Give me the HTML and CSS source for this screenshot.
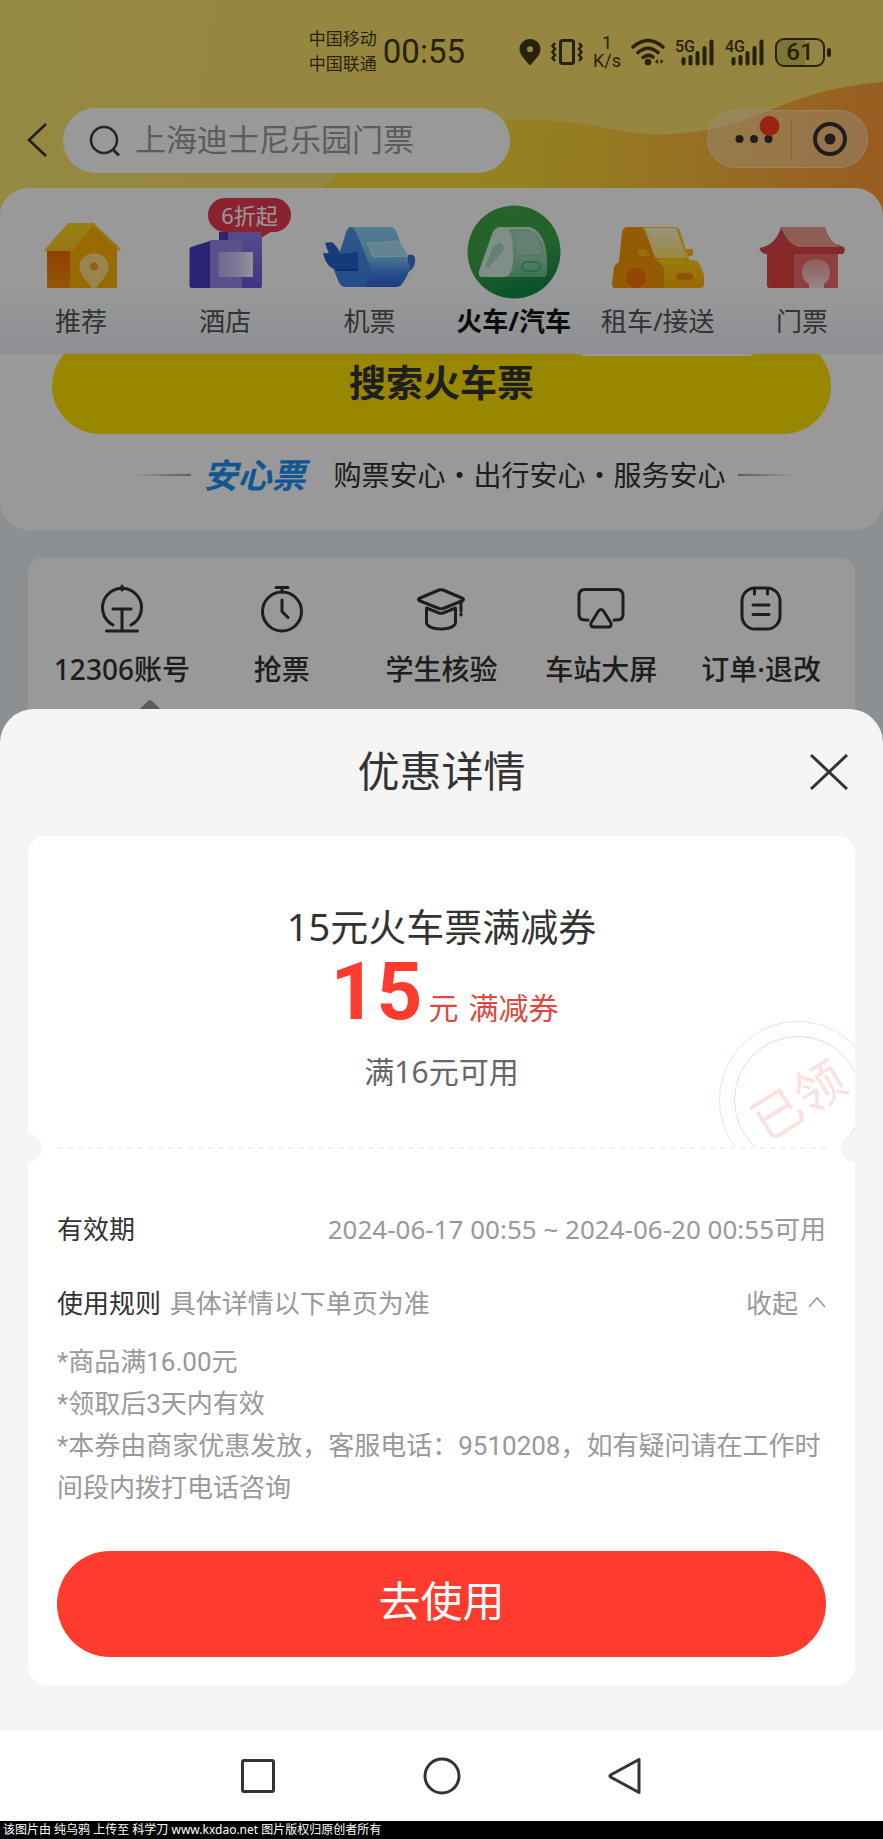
FILE: index.html
```html
<!DOCTYPE html>
<html lang="zh-CN">

<head>
    <meta charset="UTF-8">
    <meta name="viewport" content="width=device-width, initial-scale=1.0">
    <title>优惠详情</title>
    <link rel="stylesheet" href="styles.css">
</head>

<body>

    <div class="app">
        <!-- Header -->
        <header class="header">
            <svg class="header-bg" viewBox="0 0 883 216" preserveAspectRatio="none" aria-hidden="true">
                <defs>
                    <linearGradient id="wave" x1="300" x2="883" y1="0" y2="60" gradientUnits="userSpaceOnUse">
                        <stop offset="0" stop-color="#f8dc3c" />
                        <stop offset="0.400" stop-color="#f9d838" />
                        <stop offset="0.700" stop-color="#fbbb3c" />
                        <stop offset="1" stop-color="#fd9c36" />
                    </linearGradient>
                </defs>
                <path d="M300 216C340 150 440 118 540 120C600 122 620 136 670 134C760 130 780 90 883 82V216Z" fill="url(#wave)" />
            </svg>

            <div class="status-bar">
                <div class="carriers"><span>中国移动</span><span>中国联通</span></div>
                <span class="clock">00:55</span>
                <svg width="22" height="28" viewBox="0 0 22 28"><path d="M11 1C5 1 .5 5.500.5 11.200C.5 16.500 5 20 9.500 26Q11 28 12.500 26C17 20 21.500 16.500 21.500 11.200C21.500 5.500 17 1 11 1ZM11 8.200A3 3 0 1 1 11 14.200A3 3 0 1 1 11 8.200Z" fill="#453a12" fill-rule="evenodd" /></svg>
                <svg width="32" height="28" viewBox="0 0 32 28" fill="none" stroke="#453a12" stroke-width="3"><rect x="9.500" y="2.500" width="13" height="23" rx="2" /><path d="M4 5l-2.500 3 2.500 3-2.500 3 2.500 3-2.500 3 2.500 3M28 5l2.500 3-2.500 3 2.500 3-2.500 3 2.500 3-2.500 3" stroke-width="2.500" /></svg>
                <div class="speed"><span>1</span><span>K/s</span></div>
                <svg width="34" height="28" viewBox="0 0 34 28" fill="none" stroke="#453a12" stroke-width="3.500" stroke-linecap="round"><path d="M2 9Q17-4 32 9M7 14.500Q17 6 27 14.500M12 19.500Q17 15.500 22 19" /><circle cx="17" cy="24" r="1.500" /><path d="M27 21v5l-3-2.500zM29.500 21v5l3-2.500z" fill="#453a12" stroke="none" /></svg>
                <svg width="40" height="28" viewBox="0 0 40 28"><text class="net" x="0" y="14">5G</text><path d="M8.500 21v4.500M15.500 19v6.500M22.500 15v10.500M29.500 10v15.500M36.500 3.500v22" stroke="#453a12" stroke-width="4" stroke-linecap="round" /></svg>
                <svg width="40" height="28" viewBox="0 0 40 28"><text class="net" x="0" y="14">4G</text><path d="M8.500 21v4.500M15.500 19v6.500M22.500 15v10.500M29.500 10v15.500M36.500 3.500v22" stroke="#453a12" stroke-width="4" stroke-linecap="round" /></svg>
                <div class="battery">61</div>
            </div>

            <div class="search-row">
                <button class="back" aria-label="返回">
                    <svg width="22" height="36" viewBox="0 0 22 36" fill="none" stroke="#333" stroke-width="2.500"><path d="M20 2L3 18L20 34" /></svg>
                </button>
                <label class="search-box">
                    <svg width="32" height="32" viewBox="0 0 32 32" fill="none" stroke="#3a3d42" stroke-width="2.500"><circle cx="15" cy="15" r="13" /><path d="M24.500 25L30 30.500" stroke-width="3" /></svg>
                    <input type="text" placeholder="上海迪士尼乐园门票" aria-label="搜索">
                </label>
                <div class="capsule">
                    <button class="more" aria-label="更多">
                        <svg width="40" height="40" viewBox="0 0 40 40"><circle cx="5.500" cy="20" r="4" fill="#333" /><circle cx="20" cy="20" r="4" fill="#333" /><circle cx="34.500" cy="20" r="4" fill="#333" /><circle cx="35.500" cy="7" r="10" fill="#ff3a20" /></svg>
                    </button>
                    <button class="exit" aria-label="关闭小程序">
                        <svg width="36" height="36" viewBox="0 0 36 36"><circle cx="18" cy="18" r="15" fill="none" stroke="#333" stroke-width="4" /><circle cx="18" cy="18" r="5.500" fill="#333" /></svg>
                    </button>
                </div>
            </div>
        </header>

        <!-- Category tabs -->
        <nav class="tabs">
            <a href="#" class="tab">
                <svg class="tab-icon" viewBox="0 0 100 100">
                    <defs>
                        <linearGradient id="roof" x1="0" x2="0" y1="0" y2="1"><stop offset="0" stop-color="#ffd918" /><stop offset="1" stop-color="#ffc52c" /></linearGradient>
                        <linearGradient id="side" x1="0" x2="0" y1="0" y2="1"><stop offset="0" stop-color="#f06a06" /><stop offset="1" stop-color="#f69110" /></linearGradient>
                    </defs>
                    <path d="M16 47H40V86H16Z" fill="url(#side)" />
                    <path d="M62 23L86 46V86H39V48Z" fill="#ffaf08" />
                    <path d="M37 21H62L40 49H12.500Z" fill="url(#roof)" />
                    <path d="M40 49L62 22L89 48" fill="none" stroke="#ffc824" stroke-width="2.500" />
                    <path d="M63 52C55 52 49 57.500 49 65C49 74 58 79 60 84Q63 87 66 84C68 79 77 74 77 65C77 57.500 71 52 63 52Z" fill="#ffdc86" stroke="#ffe9a8" />
                    <circle cx="63" cy="64.500" r="4" fill="#f4a21c" />
                </svg>
                <span>推荐</span>
            </a>
            <a href="#" class="tab">
                <svg class="tab-icon" viewBox="0 0 100 100">
                    <defs>
                        <linearGradient id="pane"><stop offset="0" stop-color="#b9b0f5" /><stop offset="0.600" stop-color="#d5cffa" /><stop offset="1" stop-color="#f6f4ff" /></linearGradient>
                        <linearGradient id="tower" x1="0" x2="0" y1="0" y2="1"><stop offset="0" stop-color="#8d80e8" /><stop offset="1" stop-color="#6c58d8" /></linearGradient>
                    </defs>
                    <path d="M44 30H87V84Q87 86 85 86H44Z" fill="url(#tower)" />
                    <path d="M44 30H53V40H44Z" fill="#4b3bc4" />
                    <path d="M35 38H67V86H35Z" fill="#9388e6" />
                    <path d="M35 39L16 45Q14.500 46 14.500 48V84Q14.500 86 17 86H35Z" fill="#4d3cc4" />
                    <path d="M43.500 50H78V75H43.500Z" fill="url(#pane)" />
                </svg>
                <span class="badge">6折起</span>
                <span>酒店</span>
            </a>
            <a href="#" class="tab">
                <svg class="tab-icon" viewBox="0 0 100 100">
                    <defs>
                        <linearGradient id="plane" x1="0" x2="0" y1="0" y2="1"><stop offset="0" stop-color="#88d2ef" /><stop offset="0.550" stop-color="#76b9f2" /><stop offset="0.800" stop-color="#3d7be4" /><stop offset="1" stop-color="#3468d8" /></linearGradient>
                        <linearGradient id="nose" x1="0" x2="0" y1="0" y2="1"><stop offset="0" stop-color="#4f93e8" /><stop offset="1" stop-color="#3f7fe2" /></linearGradient>
                    </defs>
                    <path d="M6 41L13 40Q18 44 22 52H10Z" fill="#2e63c8" />
                    <path d="M88 53Q95 51 96 56Q97 66 89 70Z" fill="#3c77d8" />
                    <path d="M31 25H71Q75 25 77 29L91 65Q90 72 83 82Q81 85 77 85H28Q22 85 20 80L15 68L25 38Q27 26 31 25Z" fill="url(#plane)" />
                    <path d="M31 25Q36 26 38 32L52 66Q51 78 46 85H28Q22 85 20 80L15 68L26 34Q28 26 31 25Z" fill="url(#nose)" />
                    <path d="M4 51Q21 53 39 50V68H17Q7 65 4 51Z" fill="#235fca" />
                    <path d="M17 68H39" stroke="#1b3fa5" stroke-width="1.500" />
                    <path d="M48 41L80 39L89 54L54 55Z" fill="#a9dcf2" stroke="#c7ebf7" />
                </svg>
                <span>机票</span>
            </a>
            <a href="#" class="tab active">
                <svg class="tab-icon" viewBox="0 0 100 100">
                    <defs>
                        <linearGradient id="train" x1="0" x2="0" y1="0" y2="1"><stop offset="0" stop-color="#d2ebdf" /><stop offset="1" stop-color="#6bbf8d" /></linearGradient>
                        <linearGradient id="disc" x1="0" x2="0.300" y1="0" y2="1"><stop offset="0" stop-color="#41a845" /><stop offset="0.600" stop-color="#3ba44c" /><stop offset="1" stop-color="#168a46" /></linearGradient>
                    </defs>
                    <circle cx="50" cy="50" r="46.500" fill="url(#disc)" />
                    <path d="M34 25H64C76 26 83 42 83 58V71Q83 75 79 75H40Z" fill="url(#train)" />
                    <path d="M36 25C45 26 49 38 49 55C49 66 47 75 40 75H18Q14 75 15 69L28 32Q31 25 36 25Z" fill="#d5ede5" />
                    <path d="M48 28H64C73 30 78 40 79 52Q68 54 56 54Q51 53 51 46Q51 35 46 28Z" fill="#a9d6c1" stroke="#7cc29b" />
                    <path d="M35 41Q41 42 39 49L24 66Q21 67 22 62L29 45Z" fill="#a5d5c4" />
                    <rect x="58" y="60" width="18" height="9" rx="4.500" fill="none" stroke="#4aa673" stroke-width="1.500" />
                </svg>
                <span>火车/汽车</span>
            </a>
            <a href="#" class="tab">
                <svg class="tab-icon" viewBox="0 0 100 100">
                    <defs>
                        <linearGradient id="glass" x1="0" x2="0" y1="0" y2="1"><stop offset="0" stop-color="#fff6cf" /><stop offset="1" stop-color="#ffe36b" /></linearGradient>
                        <linearGradient id="hood" x1="0" x2="0" y1="0" y2="1"><stop offset="0" stop-color="#ffd21c" /><stop offset="1" stop-color="#ffae04" /></linearGradient>
                    </defs>
                    <path d="M19 25H66Q70 25 72 29L82 60H46Z" fill="#ffc610" />
                    <path d="M20 25H34L50 58L56 64V86H7Q4 86 4 82L6 65Q7 62 11 60L14 30Q15 25 20 25Z" fill="#f69808" />
                    <path d="M37 26H68L79 56H47Z" fill="url(#glass)" />
                    <path d="M32 47H38L42 54H32Q28 50 32 47ZM78 47H84Q87 50 84 54H80Z" fill="#ffb91a" />
                    <path d="M46 58H86Q91 59 93 65L96 73V82Q96 86 92 86H56V66Q53 60 46 58Z" fill="url(#hood)" />
                    <circle cx="28" cy="76" r="10" fill="#f4730a" />
                    <rect x="68" y="71" width="17" height="7" rx="3.500" fill="#f28a08" />
                </svg>
                <span>租车/接送</span>
            </a>
            <a href="#" class="tab">
                <svg class="tab-icon" viewBox="0 0 100 100">
                    <defs>
                        <linearGradient id="arch" x1="0" x2="0" y1="0" y2="1"><stop offset="0" stop-color="#f09c9c" /><stop offset="1" stop-color="#f8dede" /></linearGradient>
                    </defs>
                    <path d="M15 50H86V83Q86 86 83 86H18Q15 86 15 83Z" fill="#e04243" />
                    <path d="M42 52H86V83Q86 86 83 86H42Z" fill="#e86a6a" />
                    <path d="M29 25H73Q76 37 83 42L92 45Q94 48 91 52H86H13Q8 50 7.500 46Q24 43 29 25Z" fill="#de4749" />
                    <path d="M29 25H73Q76 40 88 45H47Q35 42 29 25Z" fill="#f09a90" />
                    <path d="M57 86V82Q50 78 50 71Q50 58 64 57Q78 58 78 71Q78 78 72 82V86Z" fill="url(#arch)" />
                </svg>
                <span>门票</span>
            </a>
        </nav>

        <!-- Ticket search -->
        <section class="search-card">
            <div class="search-wrap">
                <button class="search-btn">搜索火车票</button>
                <span class="bubble"></span>
            </div>
            <div class="assurance">
                <span class="line"></span>
                <strong>安心票</strong>
                <span>购票安心・出行安心・服务安心</span>
                <span class="line right"></span>
            </div>
        </section>

        <!-- Services -->
        <section class="services">
            <a href="#" class="service">
                <svg width="50" height="50" viewBox="0 0 50 50" class="line-icon"><path d="M16 41A19.500 19.500 0 1 1 34 41M25 2V6M16 25H34M25 25V46M9.500 47H40.500" /></svg>
                <span>12306账号</span>
            </a>
            <a href="#" class="service">
                <svg width="50" height="50" viewBox="0 0 50 50" class="line-icon"><circle cx="25" cy="27.500" r="19.500" /><path d="M19 3.500H31M25 4V8M25 16V27.500L31 33.500" /></svg>
                <span>抢票</span>
            </a>
            <a href="#" class="service">
                <svg width="50" height="50" viewBox="0 0 50 50" class="line-icon"><path d="M3 14.500L23 6Q25 5.500 27 6L47 14.500Q48 15.500 47 16.500L27 24.500Q25 25 23 24.500L3 16.500Q2 15.500 3 14.500ZM10.500 24V39Q11 42 17 44Q25 46 33 44Q39 42 39.500 39V24M10.500 24L23 29Q25 29.500 27 29L39.500 24M45 18V27M45 30V31" /></svg>
                <span>学生核验</span>
            </a>
            <a href="#" class="service">
                <svg width="50" height="50" viewBox="0 0 50 50" class="line-icon"><path d="M12 36H9Q3 36 3 30V12Q3 5.500 9 5.500H41Q47 5.500 47 12V30Q47 36 41 36H38M22.500 27Q25 24 27.500 27L35 39Q36 43 32 43H18Q14 43 15 39Z" /></svg>
                <span>车站大屏</span>
            </a>
            <a href="#" class="service">
                <svg width="50" height="50" viewBox="0 0 50 50" class="line-icon"><rect x="6" y="4" width="38" height="41" rx="13" /><path d="M18.500 5V10M31.500 5V10M17 21H33M17 30.500H33" /></svg>
                <span>订单·退改</span>
            </a>
            <span class="pointer"></span>
        </section>

        <div class="mask"></div>
    </div>

    <!-- Coupon details sheet -->
    <main class="sheet">
        <div class="sheet-head">
            <h1>优惠详情</h1>
            <button class="close" aria-label="关闭">
                <svg width="40" height="40" viewBox="0 0 40 40" stroke="#333" stroke-width="3"><path d="M2 3L38 37M38 3L2 37" /></svg>
            </button>
        </div>

        <div class="coupon">
            <div class="coupon-top">
                <h2>15元火车票满减券</h2>
                <p class="amount"><b>15</b><span>元</span><span>满减券</span></p>
                <p class="condition">满16元可用</p>
                <div class="stamp"><span>已领</span></div>
            </div>

            <div class="divider"></div>

            <div class="coupon-info">
                <div class="row">
                    <span class="label">有效期</span>
                    <span>2024-06-17 00:55 ~ 2024-06-20 00:55可用</span>
                </div>
                <div class="row">
                    <span><span class="label">使用规则</span> <span class="hint">具体详情以下单页为准</span></span>
                    <button class="toggle">收起
                        <svg width="18" height="12" viewBox="0 0 18 12" fill="none" stroke="#999" stroke-width="1.500"><path d="M1 11L9 2L17 11" /></svg>
                    </button>
                </div>
                <div class="rules">
                    <p>*商品满16.00元</p>
                    <p>*领取后3天内有效</p>
                    <p>*本券由商家优惠发放，客服电话：9510208，如有疑问请在工作时间段内拨打电话咨询</p>
                </div>
                <button class="use-btn">去使用</button>
            </div>
        </div>
    </main>

    <!-- System navigation -->
    <nav class="system-nav">
        <button aria-label="最近任务"><svg width="40" height="40" viewBox="0 0 40 40"><rect x="4.500" y="4.500" width="31" height="31" rx="1.500" /></svg></button>
        <button aria-label="主页"><svg width="40" height="40" viewBox="0 0 40 40"><circle cx="20" cy="20" r="17" /></svg></button>
        <button aria-label="返回上一页"><svg width="40" height="40" viewBox="0 0 40 40"><path d="M33 3.500V36.500L4.500 21Q3.500 20 4.500 19Z" /></svg></button>
    </nav>

    <footer class="credit">该图片由 纯乌鸦 上传至 科学刀 www.kxdao.net 图片版权归原创者所有</footer>

</body>

</html>
```
FILE: styles.css
```css
/* Global Styles */
* {
    box-sizing: border-box;
}

body {
    margin: 0;
    font-family: "Noto Sans", "Noto Sans CJK SC", sans-serif;
    background-color: #f5f5f5;
    color: #333;
}

h1, h2, p {
    margin: 0;
    font-weight: normal;
}

a {
    color: inherit;
    text-decoration: none;
}

button {
    padding: 0;
    border: none;
    background: none;
    font-family: inherit;
    color: inherit;
    cursor: pointer;
}

svg {
    display: block;
    flex-shrink: 0;
    overflow: visible;
}

.app {
    position: relative;
    background-color: #ecf0f3;
}

.mask {
    position: absolute;
    inset: 0;
    z-index: 3;
    background-color: rgba(0, 0, 0, 0.4);
}

/* Header */
.header {
    position: relative;
    height: 216px;
    background: linear-gradient(100deg, #f6e66e, #fbe16c 30%, #f8de6c);
}

.header-bg {
    position: absolute;
    inset: 0;
    width: 100%;
    height: 100%;
}

.status-bar {
    position: relative;
    display: flex;
    align-items: center;
    justify-content: flex-end;
    gap: 10px;
    height: 108px;
    padding: 0 52px 4px 0;
    color: #453a12;
}

.carriers {
    display: flex;
    flex-direction: column;
    padding-bottom: 2px;
    font-size: 17px;
    line-height: 25px;
}

.clock {
    margin: 0 44px 0 -4px;
    font-family: Roboto, sans-serif;
    font-size: 33px;
    line-height: 40px;
}

.speed {
    display: flex;
    flex-direction: column;
    align-items: center;
    font-family: Roboto, sans-serif;
    font-size: 18px;
    line-height: 18px;
}

.net {
    font-family: Roboto, sans-serif;
    font-size: 16px;
    font-weight: 500;
    fill: #453a12;
}

.battery {
    position: relative;
    width: 50px;
    height: 29px;
    margin-right: 6px;
    border: 2px solid #453a12;
    border-radius: 9px;
    background: linear-gradient(90deg, #d4c25e 60%, transparent 60%);
    font-family: Roboto, sans-serif;
    font-size: 24px;
    font-weight: 500;
    line-height: 25px;
    text-align: center;
}

.battery::after {
    content: "";
    position: absolute;
    top: 8px;
    right: -8px;
    width: 4px;
    height: 9px;
    border-radius: 2px;
    background-color: #453a12;
}

.search-row {
    position: relative;
    display: flex;
    align-items: center;
    height: 65px;
    padding: 0 15px 0 26px;
}

.back {
    width: 37px;
    padding-bottom: 2px;
}

.search-box {
    display: flex;
    align-items: center;
    gap: 14px;
    width: 447px;
    height: 65px;
    padding: 0 26px;
    border-radius: 33px;
    background-color: #fff;
}

.search-box input {
    flex: 1;
    min-width: 0;
    padding: 0 0 4px;
    border: none;
    outline: none;
    background: none;
    font-family: inherit;
    font-size: 31px;
}

.search-box input::placeholder {
    color: #999;
    opacity: 1;
}

.capsule {
    display: flex;
    align-items: center;
    width: 161px;
    height: 58px;
    margin: 0 0 4px auto;
    border: 1px solid rgba(255, 255, 255, 0.4);
    border-radius: 29px;
    background-color: rgba(255, 225, 190, 0.5);
}

.capsule button {
    display: flex;
    flex: 1;
    justify-content: center;
}

.capsule .more {
    padding-left: 8px;
    border-right: 1px solid rgba(0, 0, 0, 0.15);
}

/* Category tabs */
.tabs {
    position: relative;
    z-index: 2;
    display: grid;
    grid-template-columns: repeat(6, 1fr);
    margin-top: -28px;
    padding: 14px 9px;
    border-radius: 28px 28px 0 0;
    background: linear-gradient(#fff 60%, #ebeef5);
}

.tab {
    position: relative;
    display: flex;
    flex-direction: column;
    align-items: center;
    font-size: 26px;
    line-height: 38px;
    color: #555;
    white-space: nowrap;
}

.tab.active {
    color: #111;
    font-weight: bold;
}

.tab-icon {
    width: 100px;
    height: 100px;
}

.badge {
    position: absolute;
    top: -4px;
    left: 55px;
    padding: 0 13px;
    border-radius: 17px;
    background-color: #e63950;
    color: #fff;
    font-size: 22px;
    line-height: 34px;
}

.badge::after {
    content: "";
    position: absolute;
    right: 14px;
    bottom: -6px;
    border-top: 10px solid #e63950;
    border-right: 16px solid transparent;
}

/* Ticket search */
.search-card {
    padding: 0 52px 24px;
    border-radius: 0 0 28px 28px;
    background-color: #fff;
}

.search-wrap {
    position: relative;
    margin-top: -16px;
}

.search-btn {
    width: 100%;
    height: 96px;
    padding-bottom: 6px;
    border-radius: 48px;
    background-color: #ffe100;
    font-size: 37px;
    font-weight: bold;
    line-height: 88px;
}

.bubble {
    position: absolute;
    top: 0;
    right: 72px;
    width: 184px;
    height: 18px;
    border-radius: 0 0 12px 12px;
    background-color: #fff;
}

.assurance {
    display: flex;
    align-items: center;
    justify-content: center;
    gap: 12px;
    height: 62px;
    margin-top: 10px;
    padding-left: 46px;
    font-size: 28px;
    line-height: 40px;
    white-space: nowrap;
}

.assurance strong {
    margin-right: 16px;
    color: #1a92f5;
    font-size: 34px;
    font-style: italic;
}

.line {
    width: 56px;
    height: 2px;
    background: linear-gradient(90deg, transparent, #999);
}

.line.right {
    background: linear-gradient(90deg, #999, transparent);
}

/* Services */
.services {
    position: relative;
    display: grid;
    grid-template-columns: repeat(5, 1fr);
    margin: 28px 28px 0;
    padding: 26px 14px 54px;
    border-radius: 14px 14px 0 0;
    background-color: #fff;
}

.service {
    display: flex;
    flex-direction: column;
    align-items: center;
    gap: 14px;
    font-size: 28px;
    font-weight: 500;
    line-height: 42px;
    white-space: nowrap;
}

.line-icon {
    fill: none;
    stroke: #333;
    stroke-width: 3;
    stroke-linecap: round;
    stroke-linejoin: round;
}

.pointer {
    position: absolute;
    left: 112px;
    bottom: 21px;
    width: 20px;
    height: 20px;
    border-radius: 4px;
    background-color: #999a8c;
    transform: rotate(45deg);
}

/* Coupon details sheet */
.sheet {
    position: relative;
    z-index: 4;
    margin-top: -35px;
    padding: 0 28px 46px;
    border-radius: 34px 34px 0 0;
    background-color: #f5f5f5;
}

.sheet-head {
    display: flex;
    align-items: center;
    justify-content: center;
    position: relative;
    height: 127px;
    padding-bottom: 4px;
}

.sheet-head h1 {
    font-size: 42px;
    line-height: 60px;
}

.close {
    position: absolute;
    right: 6px;
    top: 43px;
}

.coupon {
    border-radius: 18px;
    background-color: #fff;
}

.coupon-top {
    position: relative;
    display: flex;
    flex-direction: column;
    align-items: center;
    height: 311px;
    padding-top: 63px;
    overflow: hidden;
}

.coupon-top h2 {
    font-size: 38px;
    line-height: 54px;
}

.amount {
    display: flex;
    align-items: baseline;
    height: 78px;
    padding-left: 6px;
    color: #e0483e;
    font-size: 30px;
    line-height: 78px;
}

.amount b {
    margin-right: 6px;
    color: #ff3b30;
    font-family: Roboto, sans-serif;
    font-size: 80px;
}

.amount span + span {
    margin-left: 10px;
}

.condition {
    margin-top: 20px;
    color: #666;
    font-size: 30px;
    line-height: 42px;
}

.stamp {
    position: absolute;
    top: 185px;
    right: -22px;
    display: flex;
    align-items: center;
    justify-content: center;
    width: 158px;
    height: 158px;
    border: 1px solid #fadddd;
    border-radius: 50%;
}

.stamp::before {
    content: "";
    position: absolute;
    inset: 14px;
    border: 1px solid #f5d5d8;
    border-radius: 50%;
}

.stamp span {
    color: #fce0e0;
    font-size: 50px;
    line-height: 60px;
    transform: rotate(-32deg);
}

.divider {
    position: relative;
    margin: 0 29px;
    border-top: 2px dashed #f3f3f3;
}

.divider::before,
.divider::after {
    content: "";
    position: absolute;
    top: -15px;
    width: 28px;
    height: 28px;
    border-radius: 50%;
    background-color: #f5f5f5;
}

.divider::before {
    left: -43px;
}

.divider::after {
    right: -43px;
}

.coupon-info {
    padding: 58px 29px 28px;
    color: #999;
    font-size: 26px;
}

.row {
    display: flex;
    align-items: center;
    justify-content: space-between;
    height: 42px;
    margin-bottom: 32px;
}

.label {
    color: #333;
}

.hint {
    margin-left: 2px;
}

.toggle {
    display: flex;
    align-items: center;
    gap: 10px;
    font-size: 26px;
}

.rules {
    margin-top: -14px;
    font-family: Roboto, "Noto Sans CJK SC", sans-serif;
    line-height: 42px;
}

.use-btn {
    display: block;
    width: 100%;
    height: 106px;
    margin-top: 42px;
    padding-bottom: 6px;
    border-radius: 53px;
    background-color: #ff3b30;
    color: #fff;
    font-size: 42px;
    line-height: 96px;
}

/* System navigation */
.system-nav {
    display: flex;
    align-items: center;
    justify-content: center;
    gap: 144px;
    height: 90px;
    background-color: #fff;
}

.system-nav svg {
    fill: none;
    stroke: #333;
    stroke-width: 3;
    stroke-linejoin: round;
}

.credit {
    padding-left: 3px;
    background-color: #000;
    color: #fff;
    font-size: 12px;
    line-height: 18px;
}
```
